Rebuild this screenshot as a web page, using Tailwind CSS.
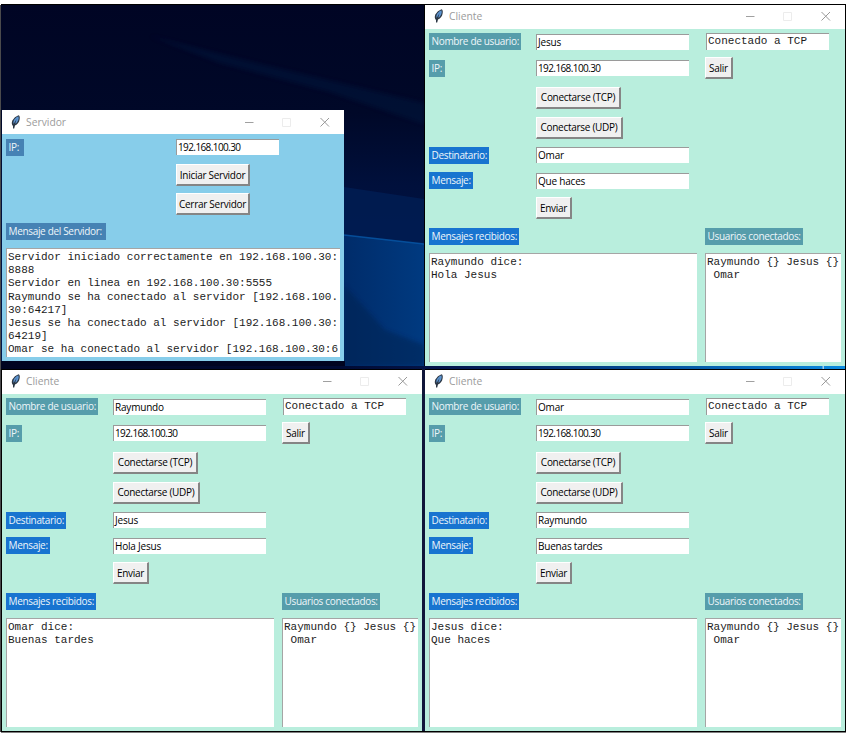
<!DOCTYPE html>
<html lang="es">
<head>
<meta charset="utf-8">
<title>Cliente / Servidor</title>
<script src="https://cdn.jsdelivr.net/npm/@tailwindcss/browser@4"></script>
</head>
<body class="bg-white w-[846px] h-[736px] overflow-hidden font-['Open_Sans','Noto_Sans',sans-serif] text-[10px] text-black">
<main id="desk" class="relative w-[846px] h-[736px] bg-white"></main>
<script>
const wallpaper = `
<svg class="absolute left-0 top-0" width="846" height="736" viewBox="0 0 846 736">
  <defs>
    <linearGradient id="sky" x1="0" y1="0" x2="0" y2="1"><stop offset="0" stop-color="#000524"/><stop offset=".3" stop-color="#000828"/><stop offset=".5" stop-color="#00103c"/><stop offset="1" stop-color="#001a50"/></linearGradient>
    <linearGradient id="beam" gradientUnits="userSpaceOnUse" x1="344" y1="0" x2="424" y2="0"><stop offset="0" stop-color="#002c6a"/><stop offset="1" stop-color="#003a80"/></linearGradient>
    <linearGradient id="strip" x1="0" y1="0" x2="1" y2="0"><stop offset="0" stop-color="#000420"/><stop offset=".4" stop-color="#000a33"/><stop offset=".52" stop-color="#03154a"/><stop offset=".75" stop-color="#034a93"/><stop offset="1" stop-color="#0c8be0"/></linearGradient>
    <filter id="soft"><feGaussianBlur stdDeviation="2"/></filter>
  </defs>
  <path fill="#000" d="M1 4H846V732.500H1Z"/>
  <path fill="#4a4a4c" d="M0 5H1V732H0Z"/>
  <path fill="url(#sky)" d="M1 5H424V366H1Z"/>
  <path fill="#001a44" opacity=".4" filter="url(#soft)" d="M150 36L240 59L424 103V124L330 92L220 63Z"/>
  <path fill="#001f55" opacity=".75" d="M344 187L424 199V245H344Z"/>
  <path fill="url(#beam)" d="M344 235L424 244V366H344Z"/>
  <path fill="#00204f" opacity=".5" filter="url(#soft)" d="M344 285L385 330L424 345V366H344Z"/>
  <path stroke="#0657a8" stroke-width="1.500" opacity=".8" fill="none" d="M344 235L424 244"/>
  <path fill="url(#strip)" d="M1 366H845V369H1Z"/>
  <path fill="#000420" d="M1 361H345V366H1Z"/>
  <path fill="#fff" opacity=".6" d="M822.500 366H824V369H822.500Z"/>
  <path fill="#10163a" d="M422 369H425V731H422Z"/>
</svg>`;

const titleBar = (name, cls) => `
<header class="flex items-center h-[24px] bg-white pl-[8px] text-[#9b9b9b] ${cls}">
  <svg width="11" height="14" viewBox="0 0 11 14"><path fill="#2c3744" d="M8.500.3Q10.300 1 9.600 4.500Q9 8.500 5 10.500L4.200 13.500H3L3 11Q1 9 2.300 5.500Q4.500 1.500 8.500.3Z"/><path fill="#5b93d0" d="M8.400 1.300Q9.200 3 8.200 5.500Q7 8 5.200 8.800L6.600 4L3.600 9Q2.800 7.500 4 5Q6 2 8.400 1.300Z"/></svg>
  <span class="ml-[5px] text-[10.3px] leading-[14px]">${name}</span>
  <svg class="ml-auto mr-[14px]" width="86" height="12" viewBox="0 0 86 12" fill="none"><path stroke="#a0a0a0" d="M1 6.500H9.500"/><path stroke="#ececec" d="M38.500 2.500H46.500V10.500H38.500Z"/><path stroke="#999" d="M76.500 2L85 10.500M85 2L76.500 10.500"/></svg>
</header>`;

const tag = (text, cls) => `<div class="h-[17px] leading-[16px] pl-[2.5px] whitespace-nowrap tracking-[-0.33px] text-[#eef6fa] ${cls}">${text}</div>`;
const entry = (text, cls) => `<div class="h-[16px] leading-[14px] pl-px bg-white border-t border-l border-t-[#9a9a9a] border-l-[#9a9a9a] whitespace-nowrap ${cls}">${text}</div>`;
const button = (text, cls) => `<button class="block h-[22px] leading-[18px] text-center whitespace-nowrap tracking-[-0.28px] bg-[#f0f0f0] border-t border-l border-r-2 border-b-2 border-t-white border-l-white border-r-[#858585] border-b-[#858585] ${cls}">${text}</button>`;
const textBox = (lines, cls) => `<div class="overflow-hidden whitespace-pre bg-white border-t border-l border-[#a5a5a5] pl-px pt-[2px] font-['Liberation_Mono',monospace] text-[11px] leading-[13.2px] text-[#1c1c1c] ${cls}">${lines.join("\n")}</div>`;

const client = (pos, user, dest, message, received) => `
<section class="absolute w-[420px] h-[361px] bg-[#b9eedd] ${pos}">
  ${titleBar("Cliente", "pb-[2px]")}
  <div class="grid grid-cols-[107px_169px_136px] grid-rows-[25px_28px_31px_29px_26px_25px_30px_26px] items-center px-[4px]">
    ${tag("Nombre de usuario:", "w-[92px] bg-[#569dab]")}
    ${entry(user, "w-[153px] tracking-[-0.2px]")}
    <div class="w-[123px] h-[17px] ml-px pl-px leading-[15px] bg-white border-t border-l border-[#9a9a9a] font-['Liberation_Mono',monospace] text-[11px] text-[#1c1c1c]">Conectado a TCP</div>
    ${tag("IP:", "w-[16px] bg-[#569dab]")}
    ${entry("192.168.100.30", "w-[153px] tracking-[-0.6px]")}
    ${button("Salir", "w-[28px]")}
    ${button("Conectarse (TCP)", "w-[85px] col-start-2")}
    ${button("Conectarse (UDP)", "w-[87px] col-start-2 row-start-4")}
    ${tag("Destinatario:", "w-[60px] bg-[#1874d0] row-start-5")}
    ${entry(dest, "w-[153px] row-start-5 tracking-[-0.2px]")}
    ${tag("Mensaje:", "w-[44px] bg-[#1874d0] row-start-6")}
    ${entry(message, "w-[153px] row-start-6 tracking-[-0.2px]")}
    ${button("Enviar", "w-[36px] col-start-2 row-start-7")}
    ${tag("Mensajes recibidos:", "w-[90px] bg-[#1874d0] row-start-8")}
    ${tag("Usuarios conectados:", "w-[98px] bg-[#569dab] col-start-3 row-start-8")}
  </div>
  <div class="flex gap-[8px] px-[4px] pt-[4px]">
    ${textBox(received, "w-[268px] h-[109px]")}
    ${textBox(["Raymundo {} Jesus {}", " Omar"], "w-[136px] h-[109px]")}
  </div>
</section>`;

const server = `
<section class="absolute left-[2px] top-[110px] w-[342px] h-[251px] bg-[#87cdea]">
  ${titleBar("Servidor", "pb-px")}
  <div class="grid grid-cols-[170px_1fr] grid-rows-[26px_30px_28px_26px] items-center px-[4px]">
    ${tag("IP:", "w-[18px] bg-[#4682b4]")}
    ${entry("192.168.100.30", "w-[103px] tracking-[-0.6px]")}
    ${button("Iniciar Servidor", "w-[74px] col-start-2")}
    ${button("Cerrar Servidor", "w-[74px] col-start-2 row-start-3")}
    ${tag("Mensaje del Servidor:", "w-[100px] bg-[#4682b4] row-start-4")}
  </div>
  <div class="px-[4px] pt-[4px]">
    ${textBox(["Servidor iniciado correctamente en 192.168.100.30:", "8888", "Servidor en linea en 192.168.100.30:5555", "Raymundo se ha conectado al servidor [192.168.100.", "30:64217]", "Jesus se ha conectado al servidor [192.168.100.30:", "64219]", "Omar se ha conectado al servidor [192.168.100.30:6"], "w-[334px] h-[109px]")}
  </div>
</section>`;

document.getElementById("desk").innerHTML = wallpaper + server
  + client("left-[425px] top-[5px]", "Jesus", "Omar", "Que haces", ["Raymundo dice:", "Hola Jesus"])
  + client("left-[2px] top-[370px]", "Raymundo", "Jesus", "Hola Jesus", ["Omar dice:", "Buenas tardes"])
  + client("left-[425px] top-[370px]", "Omar", "Raymundo", "Buenas tardes", ["Jesus dice:", "Que haces"]);
</script>
</body>
</html>
